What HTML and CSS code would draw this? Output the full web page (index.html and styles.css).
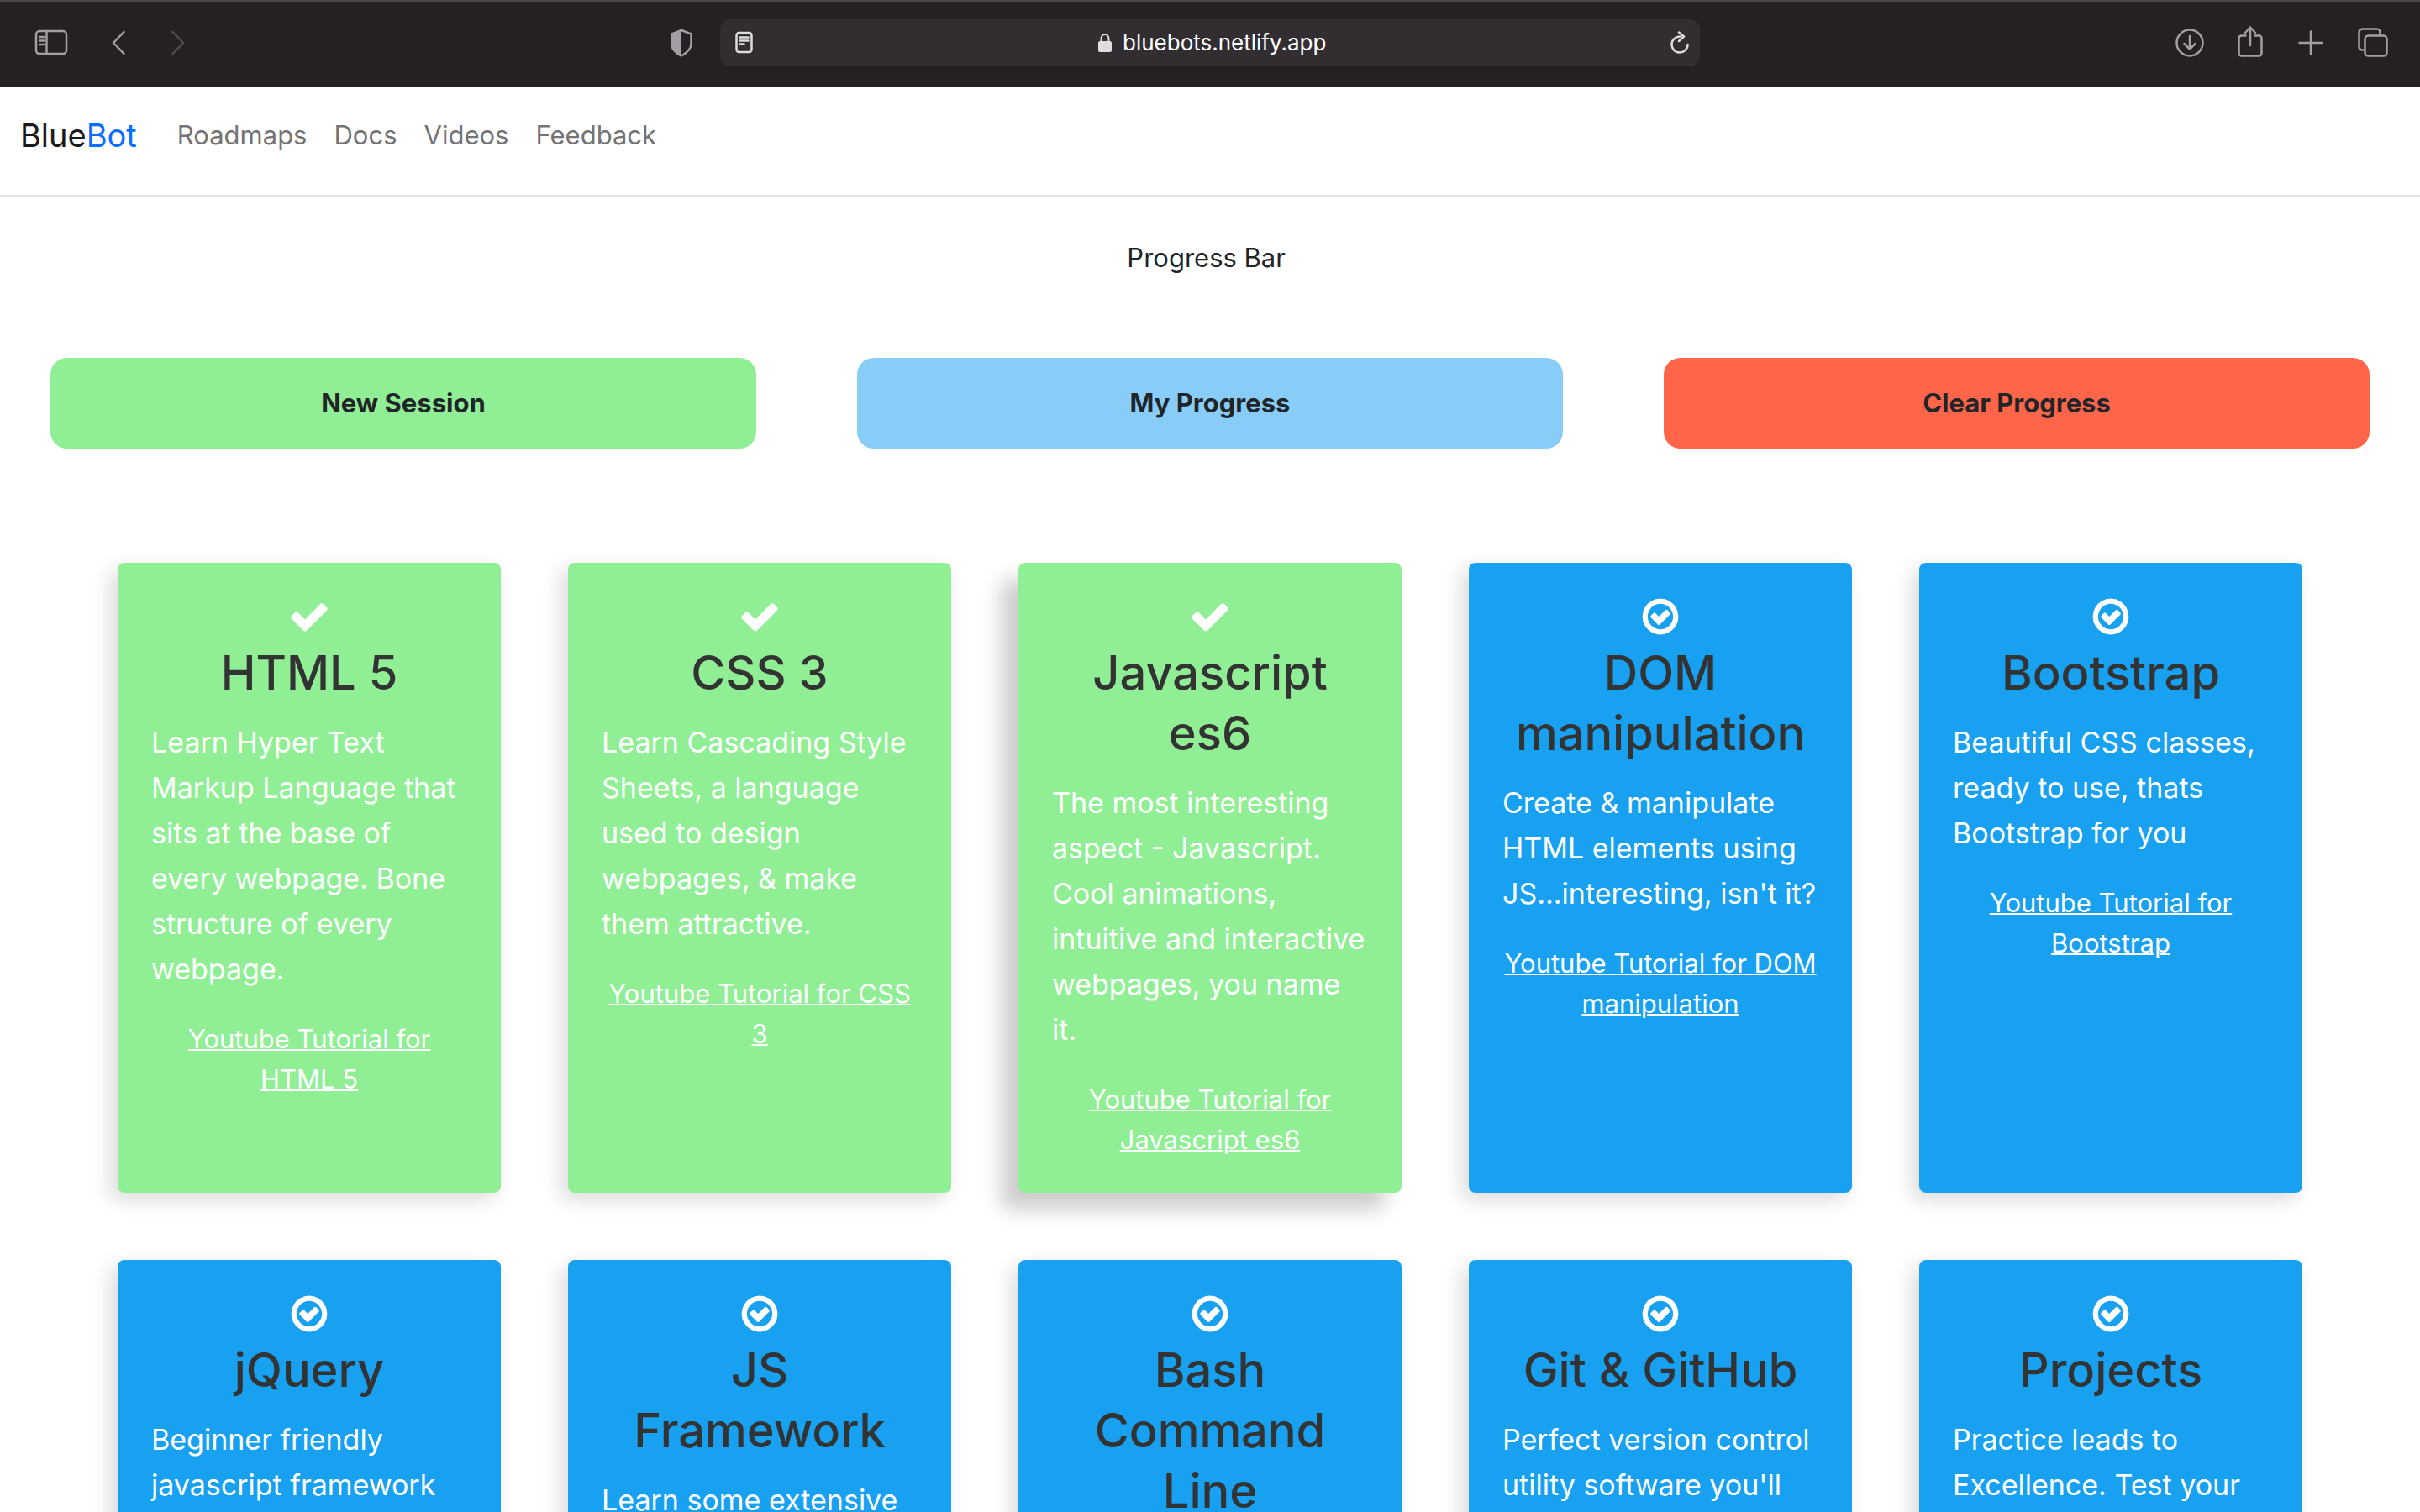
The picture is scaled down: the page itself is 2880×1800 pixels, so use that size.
FILE: index.html
```html
<!DOCTYPE html>
<html lang="en">
<head>
<meta charset="utf-8">
<title>BlueBot</title>
<link rel="stylesheet" href="styles.css">
</head>
<body>
<svg class="sprite" aria-hidden="true">
  <symbol id="check" viewBox="0 0 1792 1792"><path d="M1671 566q0 40-28 68l-724 724-136 136q-28 28-68 28t-68-28l-136-136-362-362q-28-28-28-68t28-68l136-136q28-28 68-28t68 28l294 295 656-657q28-28 68-28t68 28l136 136q28 28 28 68z"/></symbol>
  <symbol id="check-circle" viewBox="0 0 1792 1792"><path d="M1299 813l-422 422q-19 19-45 19t-45-19l-294-294q-19-19-19-45t19-45l102-102q19-19 45-19t45 19l147 147 275-275q19-19 45-19t45 19l102 102q19 19 19 45t-19 45zm141 83q0-148-73-273t-198-198-273-73-273 73-198 198-73 273 73 273 198 198 273 73 273-73 198-198 73-273zm224 0q0 209-103 385.5t-279.5 279.5-385.5 103-385.5-103-279.5-279.5-103-385.5 103-385.5 279.5-279.5 385.5-103 385.5 103 279.5 279.5 103 385.5z"/></symbol>
</svg>

<div class="toolbar">
  <div class="toolbar-side">
    <button class="tool tool-sidebar" aria-label="Show sidebar"><svg width="40" height="32" viewBox="0 0 40 32"><rect x="2" y="2" width="36" height="27" rx="4"/><path d="M14.500 2v27M6 9h5M6 13.500h5M6 18h5"/></svg></button>
    <button class="tool tool-back" aria-label="Back"><svg width="18" height="32" viewBox="0 0 18 32"><path d="M15.500 3L3 16l12.500 13"/></svg></button>
    <button class="tool tool-forward" aria-label="Forward" disabled><svg width="18" height="32" viewBox="0 0 18 32"><path d="M2.500 3L15 16 2.500 29"/></svg></button>
    <button class="tool tool-shield" aria-label="Privacy report"><svg width="28" height="34" viewBox="0 0 28 34"><path d="M14 2L25.500 6.500V18c0 7-5 11-11.500 14.500C7.500 29 2.500 25 2.500 18V6.500z"/><path class="solid" d="M14 1L1 6v12c0 8 6 12 13 16z"/></svg></button>
  </div>
  <div class="address">
    <button class="tool tool-light" aria-label="Reader"><svg width="22" height="28" viewBox="0 0 22 28"><rect x="1.500" y="2" width="18" height="23" rx="3"/><path d="M5.500 7.500h10M5.500 11.500h10M5.500 15.500h5"/></svg></button>
    <div class="address-url">
      <svg class="lock" width="18" height="24" viewBox="0 0 18 24"><path d="M4.500 11V7a4.500 5 0 0 1 9 0v4" fill="none" stroke="currentColor" stroke-width="2"/><rect x="1" y="10" width="16" height="13" rx="2" fill="currentColor"/></svg>
      <input class="url" type="text" value="bluebots.netlify.app" aria-label="Address" size="18">
    </div>
    <button class="tool tool-light" aria-label="Reload"><svg width="24" height="28" viewBox="0 0 24 28"><path d="M12.500 6.500A9.500 9.500 0 1 0 21.500 16M11 1.500l6 5-6 5.500"/></svg></button>
  </div>
  <div class="toolbar-side toolbar-end">
    <button class="tool" aria-label="Downloads"><svg width="36" height="40" viewBox="0 0 36 40"><circle cx="18" cy="20" r="15.500"/><path d="M18 12v15M11.500 21l6.500 6.500 6.500-6.500"/></svg></button>
    <button class="tool" aria-label="Share"><svg width="36" height="40" viewBox="0 0 36 40"><path d="M12.500 11.500H7.500a3 3 0 0 0-3 3v18a3 3 0 0 0 3 3h21a3 3 0 0 0 3-3v-18a3 3 0 0 0-3-3h-5M18 23V1.500M12 8l6-6.500L24 8"/></svg></button>
    <button class="tool" aria-label="New tab"><svg width="36" height="40" viewBox="0 0 36 40"><path d="M18 6.500v27M4.500 20h27"/></svg></button>
    <button class="tool" aria-label="Tab overview"><svg width="38" height="40" viewBox="0 0 38 40"><path d="M8.500 28.500h-1a4 4 0 0 1-4-4v-17a4 4 0 0 1 4-4h17a4 4 0 0 1 4 4v3"/><rect x="10.500" y="11.500" width="26" height="24" rx="4"/></svg></button>
  </div>
</div>

<div class="page">
  <nav class="nav">
    <a class="brand" href="#">Blue<span class="brand-accent">Bot</span></a>
    <a class="nav-link" href="#">Roadmaps</a>
    <a class="nav-link" href="#">Docs</a>
    <a class="nav-link" href="#">Videos</a>
    <a class="nav-link" href="#">Feedback</a>
  </nav>

  <main>
    <p class="progress-label">Progress Bar&nbsp;</p>
    <div class="actions">
      <button class="action action-new">New Session</button>
      <button class="action action-progress">My Progress</button>
      <button class="action action-clear">Clear Progress</button>
    </div>

    <div class="cards">
      <article class="card card-done">
        <svg class="card-icon"><use href="#check"/></svg>
        <h2 class="card-title">HTML 5</h2>
        <p class="card-text">Learn Hyper Text Markup Language that sits at the base of every webpage. Bone structure of every webpage.</p>
        <a class="card-link" href="#">Youtube Tutorial for HTML 5</a>
      </article>
      <article class="card card-done">
        <svg class="card-icon"><use href="#check"/></svg>
        <h2 class="card-title">CSS 3</h2>
        <p class="card-text">Learn Cascading Style Sheets, a language used to design webpages, &amp; make them attractive.</p>
        <a class="card-link" href="#">Youtube Tutorial for CSS 3</a>
      </article>
      <article class="card card-done card-raised">
        <svg class="card-icon"><use href="#check"/></svg>
        <h2 class="card-title">Javascript es6</h2>
        <p class="card-text">The most interesting aspect - Javascript. Cool animations, intuitive and interactive webpages, you name it.</p>
        <a class="card-link" href="#">Youtube Tutorial for Javascript es6</a>
      </article>
      <article class="card">
        <svg class="card-icon"><use href="#check-circle"/></svg>
        <h2 class="card-title">DOM manipulation</h2>
        <p class="card-text">Create &amp; manipulate HTML elements using JS...interesting, isn't it?</p>
        <a class="card-link" href="#">Youtube Tutorial for DOM manipulation</a>
      </article>
      <article class="card">
        <svg class="card-icon"><use href="#check-circle"/></svg>
        <h2 class="card-title">Bootstrap</h2>
        <p class="card-text">Beautiful CSS classes, ready to use, thats Bootstrap for you</p>
        <a class="card-link" href="#">Youtube Tutorial for Bootstrap</a>
      </article>
      <article class="card">
        <svg class="card-icon"><use href="#check-circle"/></svg>
        <h2 class="card-title">jQuery</h2>
        <p class="card-text">Beginner friendly javascript framework</p>
      </article>
      <article class="card">
        <svg class="card-icon"><use href="#check-circle"/></svg>
        <h2 class="card-title">JS Framework</h2>
        <p class="card-text">Learn some extensive</p>
      </article>
      <article class="card">
        <svg class="card-icon"><use href="#check-circle"/></svg>
        <h2 class="card-title">Bash Command Line</h2>
      </article>
      <article class="card">
        <svg class="card-icon"><use href="#check-circle"/></svg>
        <h2 class="card-title">Git &amp; GitHub</h2>
        <p class="card-text">Perfect version control utility software you'll</p>
      </article>
      <article class="card">
        <svg class="card-icon"><use href="#check-circle"/></svg>
        <h2 class="card-title">Projects</h2>
        <p class="card-text">Practice leads to Excellence. Test your</p>
      </article>
    </div>
  </main>
</div>
</body>
</html>
```
FILE: styles.css
```css
* {
  box-sizing: border-box;
}

body {
  margin: 0;
  height: 100vh;
  display: flex;
  flex-direction: column;
  overflow: hidden;
  background: #fff;
  color: #212529;
  font-family: Inter, "Liberation Sans", sans-serif;
  font-size: 31px;
  line-height: 48px;
}

button,
input {
  font: inherit;
  color: inherit;
  border: 0;
  padding: 0;
  background: none;
}

.sprite {
  position: absolute;
  width: 0;
  height: 0;
}

/* Browser toolbar */
.toolbar {
  flex: none;
  display: grid;
  grid-template-columns: 1fr 40.5% 1fr;
  align-items: center;
  height: 104px;
  padding-bottom: 2px;
  box-shadow: inset 0 2px #4c494d;
  background: #252024;
  color: #a39ea3;
}

.toolbar-side {
  display: flex;
  align-items: center;
  padding: 0 32px 0 41px;
}

.toolbar-end {
  justify-content: flex-end;
  gap: 36px;
  padding-right: 38px;
}

.tool {
  display: flex;
}

.tool svg {
  fill: none;
  stroke: currentColor;
  stroke-width: 2.5;
  stroke-linecap: round;
  stroke-linejoin: round;
}

.tool .solid {
  fill: currentColor;
  stroke: none;
}

.tool-back {
  margin-left: 51px;
}

.tool-forward {
  margin-left: 53px;
  color: #514c50;
}

.tool-shield {
  margin-left: auto;
}

.tool-light {
  color: #dedcde;
}

.address {
  display: flex;
  align-items: center;
  justify-content: space-between;
  height: 56px;
  padding: 0 12px 0 18px;
  border-radius: 12px;
  background: #322d31;
}

.address-url {
  display: flex;
  align-items: center;
  gap: 12px;
  color: #dedcde;
}

.url {
  width: 242px;
  color: #fff;
  font-size: 26px;
  line-height: 32px;
}

/* Site page */
.page {
  flex: 1;
  min-height: 0;
  overflow: hidden;
}

.nav {
  display: flex;
  align-items: center;
  height: 130px;
  padding: 0 24px 14px;
  border-bottom: 2px solid #dee2e6;
}

.brand {
  margin-right: 32px;
  color: #1a1a1a;
  font-size: 38px;
  text-decoration: none;
}

.brand-accent {
  color: #0a6fff;
}

.nav-link {
  padding: 0 16px;
  color: #737373;
  text-decoration: none;
}

.progress-label {
  margin: 49px 0 95px;
  text-align: center;
}

.actions {
  display: grid;
  grid-template-columns: repeat(3, 1fr);
  gap: 120px;
  padding: 0 60px;
}

.action {
  height: 108px;
  border-radius: 20px;
  font-weight: 700;
}

.action-new {
  background: #90ee95;
}

.action-progress {
  background: #88cdf8;
}

.action-clear {
  background: #ff6549;
}

.cards {
  display: grid;
  grid-template-columns: repeat(5, 1fr);
  grid-auto-rows: minmax(750px, auto);
  gap: 80px;
  padding: 136px 140px 80px;
}

.card {
  padding: 39px 40px;
  border-radius: 8px;
  background: #18a0f1;
  box-shadow: -8px 8px 24px rgba(0, 0, 0, 0.15);
  color: #fff;
  text-align: center;
}

.card-done {
  background: #90ee95;
}

.card-raised {
  box-shadow: -20px 20px 24px rgba(0, 0, 0, 0.2);
}

.card-icon {
  display: block;
  width: 50px;
  height: 50px;
  margin: 0 auto 6px;
  fill: #fff;
}

.card-title {
  margin: 0 0 20px;
  color: #333;
  font-size: 56px;
  font-weight: 500;
  line-height: 72px;
}

.card-text {
  margin: 0 0 32px;
  font-size: 34px;
  line-height: 54px;
  text-align: left;
}

.card-link {
  display: block;
  color: #fff;
  text-decoration: underline;
  text-decoration-thickness: 2px;
}
```
